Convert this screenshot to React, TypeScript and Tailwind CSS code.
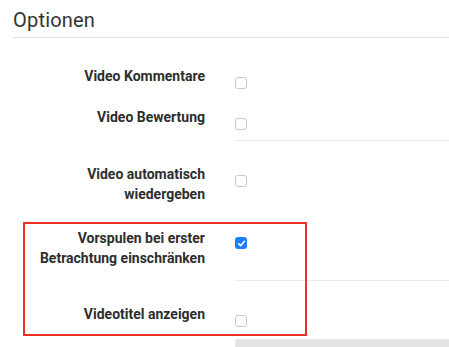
import React from 'react';

const Box = ({ checked = false }: { checked?: boolean }) =>
  checked ? (
    <span className="flex h-[12px] w-[12px] items-center justify-center rounded-[3px] bg-[#1a7fff]">
      <svg width="9" height="9" viewBox="0 0 10 10" fill="none">
        <path d="M1.8 5.2 L4 7.4 L8.3 2.6" stroke="white" strokeWidth="1.7" strokeLinecap="round" strokeLinejoin="round" />
      </svg>
    </span>
  ) : (
    <span className="block h-[12px] w-[12px] rounded-[3px] border border-[#c9c9c9] bg-white" />
  );

const Row = ({ label, checked, cbTop = 'pt-[11px]', className = '' }: { label: React.ReactNode; checked?: boolean; cbTop?: string; className?: string }) => (
  <div className={`flex ${className}`}>
    <div className="w-[192px] text-right text-[14px] font-bold leading-[20px] text-[#2e2e2e]">{label}</div>
    <div className={`pl-[30px] ${cbTop}`}>
      <Box checked={checked} />
    </div>
  </div>
);

const Divider = ({ className = '' }: { className?: string }) => (
  <div className={`ml-[222px] h-px bg-[#ececec] ${className}`} />
);

export default function App() {
  return (
    <div className="relative h-[347px] w-[449px] overflow-hidden bg-white pl-[13px] pt-[7px] font-['Roboto',sans-serif]">
      <h2 className="border-b border-[#e3e3e3] pb-[4px] text-[20px] font-normal leading-[26px] tracking-[0.2px] text-[#333]">Optionen</h2>

      <Row label="Video Kommentare" className="mt-[28px]" />
      <Row label="Video Bewertung" className="mt-[18px]" />
      <Divider className="mt-[10px]" />
      <Row label={<>Video automatisch<br />wiedergeben</>} className="mt-[23px]" />
      <Row label={<>Vorspulen bei erster<br />Betrachtung einschränken</>} checked cbTop="pt-[9px]" className="mt-[24px]" />
      <Divider className="mt-[12px]" />
      <Row label="Videotitel anzeigen" className="mt-[23px]" />
      <div className="ml-[222px] mt-[12px] h-[10px] rounded-tl-[3px] bg-[#e4e4e4]" />

      <div className="pointer-events-none absolute left-[23px] top-[222px] h-[114px] w-[284px] border-2 border-[#ee3124]" />
    </div>
  );
}
